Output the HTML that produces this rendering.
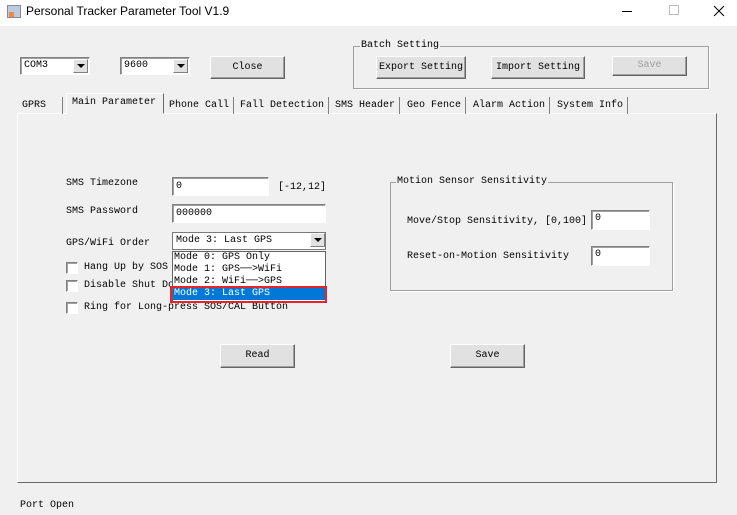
<!DOCTYPE html>
<html><head><style>
*{box-sizing:border-box;margin:0;padding:0}
body{width:737px;height:515px;background:#f0f0f0;position:relative;overflow:hidden;font-family:"Liberation Mono","Noto Sans CJK SC",monospace;font-size:10px;color:#000}
.a{position:absolute;white-space:nowrap}
.title{left:0;top:0;width:737px;height:26px;background:#fff}
.btn{position:absolute;background:#e1e1e1;border:1px solid;border-color:#fff #646464 #646464 #fff;box-shadow:inset -1px -1px 0 #a0a0a0;text-align:center}
.inp{position:absolute;background:#fff;border:1px solid;border-color:#808080 #fff #fff #808080;box-shadow:inset 1px 1px 0 #a0a0a0;padding-left:3px}
.dd{position:absolute;width:15px;height:14px;background:#e1e1e1;border:1px solid;border-color:#fff #808080 #808080 #fff;top:1px;right:1px}
.dd:after{content:"";position:absolute;left:3px;top:4px;border-left:4px solid transparent;border-right:4px solid transparent;border-top:4px solid #000}
.cb{position:absolute;width:12px;height:12px;background:#fff;border:1px solid;border-color:#808080 #fff #fff #808080;box-shadow:inset 1px 1px 0 #a0a0a0}
.grp{position:absolute;border:1px solid #a0a0a0;box-shadow:1px 1px 0 #fff}
.grp span{position:absolute;top:-7px;left:6px;background:#f0f0f0;padding:0 1px}
.tab{position:absolute;top:97px;height:17px;line-height:17px;padding:0 4px;border-right:1px solid #808080}
</style></head><body>
<div class="a title"></div>
<div class="a" style="left:7px;top:5px;width:14px;height:13px;background:#bcd;border:1px solid #889"><div style="position:absolute;left:1px;top:6px;width:5px;height:5px;background:#e84"></div></div>
<div class="a" style="left:26px;top:4px;font-family:'Liberation Sans',sans-serif;font-size:12px">Personal Tracker Parameter Tool V1.9</div>
<div class="a" style="left:622px;top:11px;width:10px;height:1px;background:#000"></div>
<div class="a" style="left:669px;top:5px;width:10px;height:10px;border:1px solid #bbb"></div>
<svg class="a" style="left:713px;top:5px" width="12" height="12"><path d="M1 1L11 11M11 1L1 11" stroke="#000" stroke-width="1"/></svg>

<div class="inp" style="left:20px;top:57px;width:70px;height:18px;line-height:15px">COM3<div class="dd"></div></div>
<div class="inp" style="left:120px;top:57px;width:70px;height:18px;line-height:15px">9600<div class="dd"></div></div>
<div class="btn" style="left:210px;top:56px;width:75px;height:23px;line-height:21px">Close</div>

<div class="grp" style="left:353px;top:46px;width:356px;height:43px"><span>Batch Setting</span></div>
<div class="btn" style="left:376px;top:56px;width:90px;height:23px;line-height:21px">Export Setting</div>
<div class="btn" style="left:491px;top:56px;width:94px;height:23px;line-height:21px">Import Setting</div>
<div class="btn" style="left:612px;top:56px;width:75px;height:20px;line-height:18px;color:#a0a0a0">Save</div>

<div class="a" style="left:17px;top:113px;width:700px;height:370px;border:1px solid;border-color:#fff #696969 #696969 #fff"></div>
<div class="tab" style="left:18px">GPRS&nbsp;&nbsp;</div>
<div class="a" style="left:66px;top:93px;width:98px;height:21px;background:#f0f0f0;border:1px solid;border-color:#fff #696969 transparent #fff;padding-left:5px;line-height:18px">Main Parameter</div>
<div class="tab" style="left:165px">Phone Call</div>
<div class="tab" style="left:236px">Fall Detection</div>
<div class="tab" style="left:331px">SMS Header</div>
<div class="tab" style="left:403px">Geo Fence</div>
<div class="tab" style="left:469px">Alarm Action</div>
<div class="tab" style="left:553px">System Info</div>

<div class="a" style="left:66px;top:178px">SMS Timezone</div>
<div class="inp" style="left:172px;top:177px;width:97px;height:19px;line-height:17px">0</div>
<div class="a" style="left:278px;top:182px">[-12,12]</div>
<div class="a" style="left:66px;top:206px">SMS Password</div>
<div class="inp" style="left:172px;top:204px;width:154px;height:19px;line-height:17px">000000</div>
<div class="a" style="left:66px;top:238px">GPS/WiFi Order</div>
<div class="inp" style="left:172px;top:232px;width:154px;height:18px;line-height:16px;border-color:#7a7a7a;box-shadow:none">Mode 3: Last GPS<div class="dd" style="top:0;right:0"></div></div>
<div class="cb" style="left:66px;top:262px"></div><div class="a" style="left:84px;top:262px">Hang Up by SOS</div>
<div class="cb" style="left:66px;top:280px"></div><div class="a" style="left:84px;top:280px">Disable Shut Do</div>
<div class="cb" style="left:66px;top:302px"></div><div class="a" style="left:84px;top:302px">Ring for Long-press SOS/CAL Button</div>
<div class="a" style="left:172px;top:251px;width:154px;height:52px;background:#fff;border:1px solid #646464;line-height:12px">
<div style="padding-left:1px">Mode 0: GPS Only</div>
<div style="padding-left:1px">Mode 1: GPS──>WiFi</div>
<div style="padding-left:1px">Mode 2: WiFi──>GPS</div>
<div style="padding-left:1px;background:#0078d7;color:#fff">Mode 3: Last GPS</div>
</div>
<div class="a" style="left:170px;top:286px;width:157px;height:17px;border:2px solid #e8242b"></div>

<div class="grp" style="left:390px;top:182px;width:283px;height:109px"><span style="left:5px">Motion Sensor Sensitivity</span></div>
<div class="a" style="left:407px;top:216px">Move/Stop Sensitivity, [0,100]</div>
<div class="inp" style="left:591px;top:210px;width:59px;height:20px;line-height:16px">0</div>
<div class="a" style="left:407px;top:251px">Reset-on-Motion Sensitivity</div>
<div class="inp" style="left:591px;top:246px;width:59px;height:20px;line-height:16px">0</div>

<div class="btn" style="left:220px;top:344px;width:75px;height:24px;line-height:22px">Read</div>
<div class="btn" style="left:450px;top:344px;width:75px;height:24px;line-height:22px">Save</div>

<div class="a" style="left:20px;top:500px">Port Open</div>
</body></html>
